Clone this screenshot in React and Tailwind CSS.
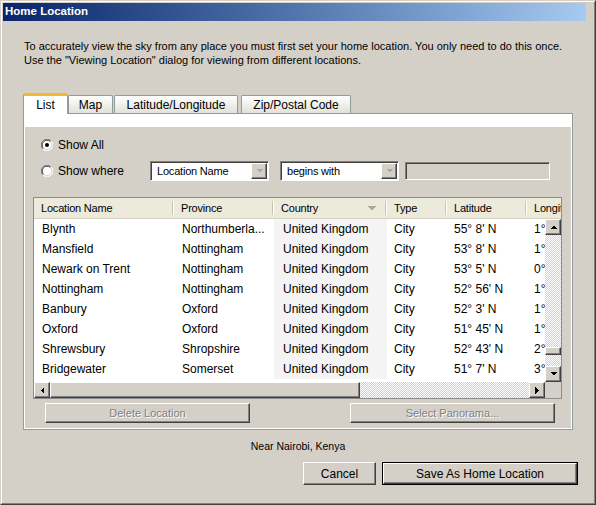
import React from 'react';

const raised =
  'border border-t-white border-l-white border-r-[#404040] border-b-[#404040] shadow-[inset_-1px_-1px_#808080] bg-[#d4d0c8]';
const sunken =
  'border border-t-[#808080] border-l-[#808080] border-r-white border-b-white shadow-[inset_1px_1px_#404040]';
const dither =
  'bg-[image:repeating-conic-gradient(#d4d0c8_0%_25%,#ffffff_0%_50%)] bg-[length:2px_2px]';

const rows = [
  ['Blynth', 'Northumberla...', 'United Kingdom', 'City', "55° 8' N", "1° 40' W"],
  ['Mansfield', 'Nottingham', 'United Kingdom', 'City', "53° 8' N", "1° 12' W"],
  ['Newark on Trent', 'Nottingham', 'United Kingdom', 'City', "53° 5' N", "0° 48' W"],
  ['Nottingham', 'Nottingham', 'United Kingdom', 'City', "52° 56' N", "1° 10' W"],
  ['Banbury', 'Oxford', 'United Kingdom', 'City', "52° 3' N", "1° 20' W"],
  ['Oxford', 'Oxford', 'United Kingdom', 'City', "51° 45' N", "1° 15' W"],
  ['Shrewsbury', 'Shropshire', 'United Kingdom', 'City', "52° 43' N", "2° 45' W"],
  ['Bridgewater', 'Somerset', 'United Kingdom', 'City', "51° 7' N", "3° 0' W"],
];

const Arrow = ({ dir, color = '#000000' }) => {
  const pts = {
    up: '0,4 7,4 3.5,0.5',
    down: '0,0 7,0 3.5,3.5',
    left: '4,0 4,7 0.5,3.5',
    right: '0,0 0,7 3.5,3.5',
  }[dir];
  const w = dir === 'up' || dir === 'down' ? 7 : 4;
  const h = dir === 'up' || dir === 'down' ? 4 : 7;
  return (
    <svg width={w} height={h} viewBox={`0 0 ${w} ${h}`} shapeRendering="crispEdges">
      <polygon points={pts} fill={color} />
    </svg>
  );
};

const Radio = ({ checked, label }) => (
  <div className="flex items-center">
    <svg width="12" height="12" viewBox="0 0 12 12">
      <circle cx="6" cy="6" r="5.5" fill="#ffffff" />
      <path d="M1.9 10.1A5.5 5.5 0 0 1 10.1 1.9" fill="none" stroke="#808080" strokeWidth="1" />
      <path d="M10.1 1.9A5.5 5.5 0 0 1 1.9 10.1" fill="none" stroke="#ffffff" strokeWidth="1" />
      <path d="M2.6 9.4A4.5 4.5 0 0 1 9.4 2.6" fill="none" stroke="#404040" strokeWidth="1" />
      <path d="M9.4 2.6A4.5 4.5 0 0 1 2.6 9.4" fill="none" stroke="#d4d0c8" strokeWidth="1" />
      {checked && <circle cx="6" cy="6" r="2" fill="#000000" />}
    </svg>
    <span className="ml-[5px] text-[12px] leading-none">{label}</span>
  </div>
);

const Combo = ({ label }) => (
  <div className={`flex h-[20px] w-[119px] bg-white p-px ${sunken}`}>
    <span className="flex-1 overflow-hidden whitespace-nowrap pl-[5px] text-[11px] leading-[16px] tracking-[-0.2px]">
      {label}
    </span>
    <div className={`flex w-[16px] items-center justify-center ${raised}`}>
      <Arrow dir="down" color="#a8a8a8" />
    </div>
  </div>
);

const Sep = () => <div className="h-[14px] w-[2px] shrink-0 border-l border-r border-l-[#c7c5b2] border-r-white" />;

const HeaderCell = ({ label, width, sort, last }) => (
  <div className={`flex h-full shrink-0 items-center ${width}`}>
    <span className="flex-1 overflow-hidden whitespace-nowrap pl-[7px] text-[11px] tracking-[-0.2px]">{label}</span>
    {sort && (
      <span className="mr-[9px]">
        <svg width="9" height="5" viewBox="0 0 9 5" shapeRendering="crispEdges">
          <polygon points="0,0 9,0 4.5,4.5" fill="#aca899" />
        </svg>
      </span>
    )}
    {!last && <Sep />}
  </div>
);

const Tab = ({ label, width, selected, gap }) =>
  selected ? (
    <div
      className={`relative z-10 mb-[-1px] flex h-[21px] items-center justify-center rounded-t-[3px] border-x border-t-[3px] border-x-[#919b9c] border-t-[#f7b731] bg-white text-[12px] ${width}`}
    >
      {label}
    </div>
  ) : (
    <div
      className={`flex h-[18px] items-center justify-center rounded-t-[2px] border border-b-0 border-[#919b9c] bg-linear-to-b from-white to-[#e2e1d9] text-[12px] ${width} ${gap}`}
    >
      {label}
    </div>
  );

const Button = ({ children, width, disabled, def }) => (
  <div className={def ? `border border-black ${width}` : width}>
    <div
      className={`flex items-center justify-center ${raised} ${def ? 'h-[21px]' : 'h-full'} ${
        disabled ? 'text-[11px] text-[#808080] [text-shadow:1px_1px_#ffffff]' : 'text-[12px]'
      }`}
    >
      {children}
    </div>
  </div>
);

export default function App() {
  return (
    <div className="h-[505px] w-[596px] border border-t-[#d4d0c8] border-l-[#d4d0c8] border-r-[#404040] border-b-[#404040] bg-[#d4d0c8] font-['Liberation_Sans',Arial,sans-serif] text-black">
      <div className="flex h-full flex-col border border-t-white border-l-white border-r-[#808080] border-b-[#808080] p-px">
        <div className="mr-[7px] flex h-[18px] items-center bg-linear-to-r from-[#0a246a] to-[#a6caf0] pl-[2px] text-[11.5px] font-bold text-white">
          Home Location
        </div>

        <p className="mt-[18px] pl-[21px] text-[11px] leading-[14px]">
          To accurately view the sky from any place you must first set your home location. You only need to do this once.
          <br />
          Use the "Viewing Location" dialog for viewing from different locations.
        </p>

        <div className="mt-[26px] flex h-[20px] items-end pl-[20px]">
          <Tab label="List" width="w-[45px]" selected />
          <Tab label="Map" width="w-[45px]" gap="ml-0" />
          <Tab label="Latitude/Longitude" width="w-[124px]" gap="ml-px" />
          <Tab label="Zip/Postal Code" width="w-[110px]" gap="ml-[3px]" />
        </div>

        <div className="ml-[20px] flex h-[317px] w-[550px] flex-col border border-[#919b9c] bg-white px-px pb-px pt-[13px]">
          <div className="flex flex-1 flex-col bg-[#d4d0c8]">
            <div className="mt-[8px] flex h-[20px] items-center pl-[16px]">
              <Radio checked label="Show All" />
            </div>
            <div className="mt-[6px] flex h-[20px] items-center pl-[16px]">
              <div className="w-[109px]">
                <Radio label="Show where" />
              </div>
              <Combo label="Location Name" />
              <div className="ml-[11px]">
                <Combo label="begins with" />
              </div>
              <div className={`ml-[6px] h-[18px] w-[145px] bg-[#d4d0c8] ${sunken}`} />
            </div>

            <div className="ml-[8px] mt-[16px] flex h-[202px] w-[529px] flex-col border border-[#8c8c8c] bg-white">
              <div className="flex h-[21px] shrink-0 overflow-hidden border-b border-b-[#d6d2c2] bg-[#ebeadb]">
                <HeaderCell label="Location Name" width="w-[140px]" />
                <HeaderCell label="Province" width="w-[100px]" />
                <HeaderCell label="Country" width="w-[113px]" sort />
                <HeaderCell label="Type" width="w-[60px]" />
                <HeaderCell label="Latitude" width="w-[80px]" />
                <HeaderCell label="Longitude" width="w-[80px]" last />
              </div>

              <div className="flex flex-1 overflow-hidden">
                <div className="flex-1 overflow-hidden">
                  {rows.map((r) => (
                    <div key={r[0]} className="flex h-[20px] items-center whitespace-nowrap text-[12px]">
                      <div className="w-[140px] shrink-0 pl-2">{r[0]}</div>
                      <div className="w-[100px] shrink-0 pl-2">{r[1]}</div>
                      <div className="flex h-full w-[113px] shrink-0 items-center bg-[#f4f4f4] pl-[9px]">{r[2]}</div>
                      <div className="w-[60px] shrink-0 pl-[7px]">{r[3]}</div>
                      <div className="w-[80px] shrink-0 pl-[7px]">{r[4]}</div>
                      <div className="w-[80px] shrink-0 pl-[7px]">{r[5]}</div>
                    </div>
                  ))}
                </div>
                <div className="flex w-[16px] shrink-0 flex-col">
                  <div className={`flex h-[16px] shrink-0 items-center justify-center ${raised}`}>
                    <Arrow dir="up" />
                  </div>
                  <div className={`flex-1 ${dither}`}>
                    <div className={`mt-[112px] h-[8px] ${raised}`} />
                  </div>
                  <div className={`flex h-[16px] shrink-0 items-center justify-center ${raised}`}>
                    <Arrow dir="down" />
                  </div>
                </div>
              </div>

              <div className="flex h-[16px] shrink-0">
                <div className={`flex w-[16px] items-center justify-center ${raised}`}>
                  <Arrow dir="left" />
                </div>
                <div className={`w-[310px] ${raised}`} />
                <div className={`flex-1 ${dither}`} />
                <div className={`flex w-[16px] items-center justify-center ${raised}`}>
                  <Arrow dir="right" />
                </div>
                <div className="w-[16px] bg-[#d4d0c8]" />
              </div>
            </div>

            <div className="mt-[4px] flex h-[20px]">
              <div className="ml-[20px] h-full">
                <Button width="w-[205px] h-full" disabled>
                  Delete Location
                </Button>
              </div>
              <div className="ml-[100px] h-full">
                <Button width="w-[205px] h-full" disabled>
                  Select Panorama...
                </Button>
              </div>
            </div>
          </div>
        </div>

        <div className="mt-[9px] h-[14px] text-center text-[10.5px] leading-[14px]">Near Nairobi, Kenya</div>

        <div className="mt-[9px] flex h-[23px] justify-end pr-[15px]">
          <Button width="w-[73px] h-full">Cancel</Button>
          <div className="ml-[6px] h-full">
            <Button width="w-[196px] h-full" def>
              Save As Home Location
            </Button>
          </div>
        </div>
      </div>
    </div>
  );
}
